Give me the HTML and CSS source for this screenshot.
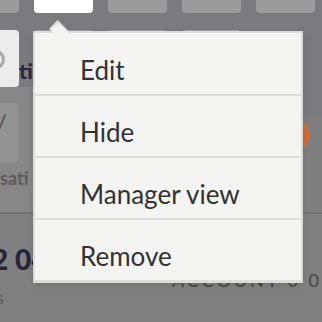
FILE: index.html
```html
<!DOCTYPE html>
<html lang="en">
<head>
    <meta charset="UTF-8">
    <meta name="viewport" content="width=device-width, initial-scale=1.0">
    <title>Widget menu</title>
    <link rel="stylesheet" href="styles.css">
</head>
<body>
    <div class="screen">
        <div class="tabs">
            <div class="tab"></div>
            <div class="tab active"></div>
            <div class="tab"></div>
            <div class="tab"></div>
            <div class="tab"></div>
        </div>

        <div class="widgets">
            <div class="widget first"><span class="ring"></span></div>
            <span class="widget-label">tic</span>
            <div class="widget"></div>
            <div class="widget"></div>
            <div class="widget"></div>
        </div>

        <div class="stats">
            <div class="stat-left">
                <div class="stat-tile">/</div>
                <div class="stat-caption">sati</div>
            </div>
            <div class="stat-right">
                <span class="dot"></span>
            </div>
        </div>

        <div class="totals">
            <div class="total-left">
                <div class="total-value">2 04</div>
                <div class="total-caption">s</div>
            </div>
            <div class="total-right">ACCOUNT 0 0</div>
        </div>
    </div>

    <div class="menu">
        <div class="menu-item">Edit</div>
        <div class="menu-item">Hide</div>
        <div class="menu-item">Manager view</div>
        <div class="menu-item">Remove</div>
    </div>
</body>
</html>
```

FILE: styles.css
```css
body {
    margin: 0;
    width: 322px;
    height: 322px;
    overflow: hidden;
    background: #7b7b7d;
    font-family: 'Lato', 'Open Sans', sans-serif;
    position: relative;
}
.screen {
    width: 322px;
    height: 322px;
}
.tabs {
    display: flex;
    gap: 15px;
    margin-left: -40px;
    height: 13px;
}
.tab {
    width: 59px;
    height: 13px;
    flex: none;
    background: #9b9b9c;
    border-radius: 0 0 4px 4px;
}
.tab.active {
    background: #ffffff;
}
.widgets {
    display: flex;
    margin-top: 17px;
    margin-left: -40px;
    height: 57px;
}
.widget {
    width: 59px;
    height: 57px;
    flex: none;
    margin-left: 15px;
    background: linear-gradient(#a2a2a2 0, #a2a2a2 2px, #dedede 2px, #d4d4d4);
    border-radius: 4px;
}
.widget.first {
    margin-left: 0;
    background: #ececec;
    position: relative;
    overflow: hidden;
}
.ring {
    position: absolute;
    left: 26px;
    top: 20px;
    width: 13px;
    height: 13px;
    border: 3px solid #a9a9a9;
    border-radius: 50%;
}
.widget-label {
    width: 0;
    margin-left: 0;
    margin-top: 29px;
    font-size: 21px;
    font-weight: 900;
    color: #26263f;
    line-height: 24px;
    white-space: nowrap;
}
.stats {
    display: flex;
    height: 125px;
}
.stat-left {
    width: 34px;
    background: #878787;
    padding-top: 16px;
}
.stat-tile {
    width: 18px;
    height: 60px;
    background: #929292;
    border-radius: 0 4px 4px 0;
    color: #4d4d4d;
    font-size: 22px;
    line-height: 30px;
    padding-top: 4px;
    box-sizing: border-box;
    text-indent: -3px;
}
.stat-caption {
    margin-top: 4px;
    font-size: 18px;
    font-weight: 700;
    color: #5b5b5b;
    line-height: 22px;
}
.stat-right {
    flex: 1;
    margin-top: 31px;
    background: #7f7f7f;
    position: relative;
}
.dot {
    position: absolute;
    left: 237px;
    top: -2px;
    width: 38px;
    height: 38px;
    border-radius: 50%;
    background: #d66a2a;
}
.totals {
    display: flex;
    border-top: 2px solid #717171;
    height: 110px;
    background: #808080;
}
.total-left {
    width: 60px;
    padding-top: 30px;
}
.total-value {
    font-size: 28px;
    font-weight: 900;
    color: #24243d;
    line-height: 30px;
    text-indent: -8px;
    white-space: nowrap;
}
.total-caption {
    margin-top: 12px;
    font-size: 18px;
    color: #5a5a5a;
    text-indent: -4px;
}
.total-right {
    margin-left: 114px;
    margin-top: 55px;
    font-size: 18px;
    letter-spacing: 3px;
    color: #444444;
    white-space: nowrap;
}
.menu {
    position: absolute;
    left: 33px;
    top: 31px;
    width: 266px;
    background: #f4f4f2;
    border: 2px solid #dcdcda;
    border-bottom-width: 3px;
    box-shadow: 0 2px 6px rgba(0, 0, 0, 0.12);
}
.menu::before {
    content: "";
    position: absolute;
    left: 16px;
    top: -11px;
    width: 15px;
    height: 15px;
    background: #f4f4f2;
    border-top: 2px solid #dcdcda;
    border-left: 2px solid #dcdcda;
    transform: rotate(45deg) scaleY(0.7);
    transform-origin: center;
}
.menu-item {
    height: 62px;
    padding: 21px 0 0 45px;
    box-sizing: border-box;
    font-size: 26px;
    line-height: 30px;
    color: #323232;
    border-top: 2px solid #dcdcda;
    position: relative;
}
.menu-item:first-child {
    border-top: none;
    height: 61px;
    padding-top: 22px;
}
```
